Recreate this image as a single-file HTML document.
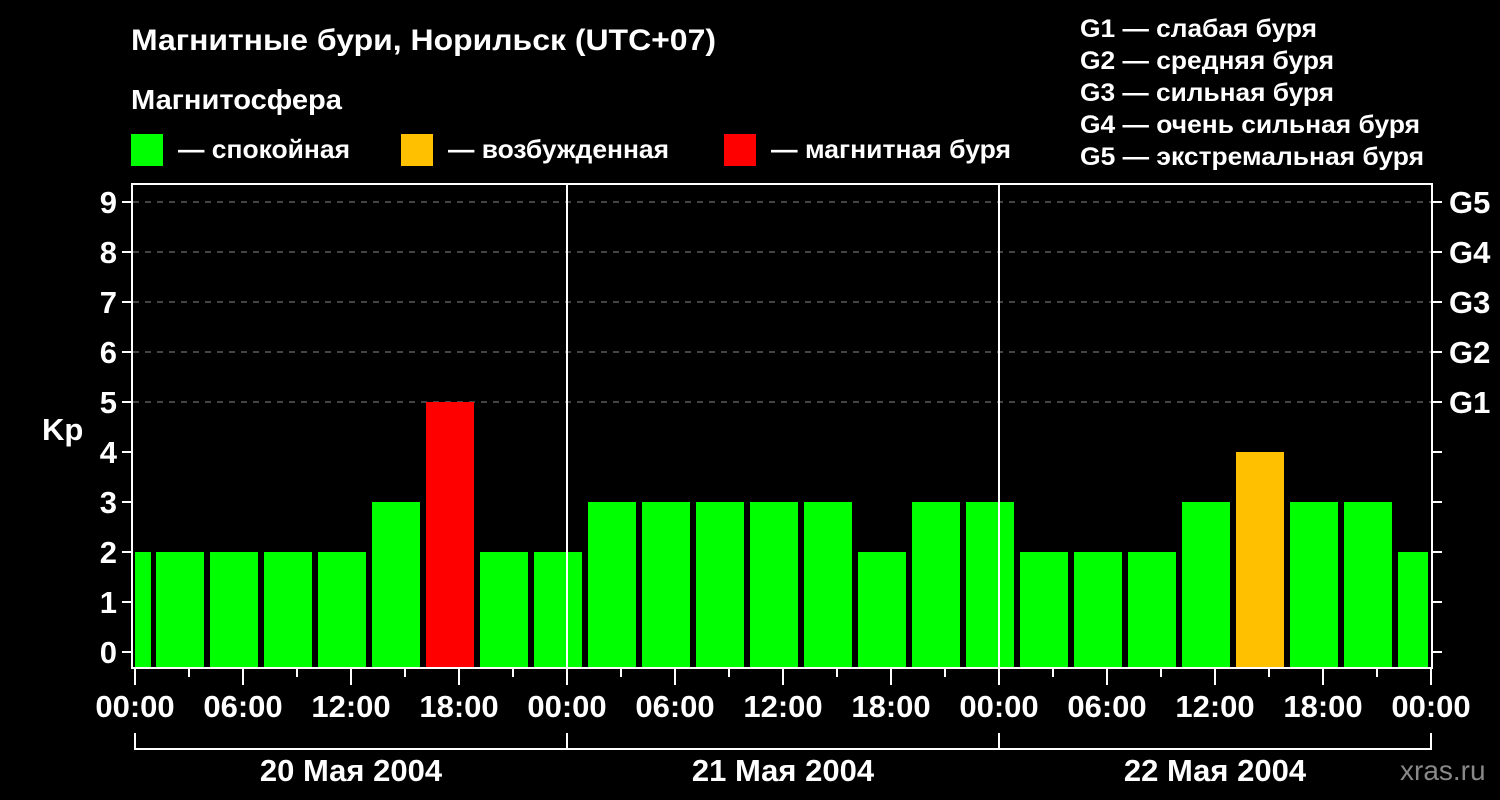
<!DOCTYPE html>
<html><head><meta charset="utf-8"><style>
html,body{margin:0;padding:0;background:#000;width:1500px;height:800px;overflow:hidden}
svg{display:block}
text{font-family:"Liberation Sans",sans-serif;font-weight:bold;fill:#fff}
</style></head><body>
<svg width="1500" height="800" viewBox="0 0 1500 800">
<text x="131" y="50" font-size="30" textLength="585" lengthAdjust="spacingAndGlyphs">Магнитные бури, Норильск (UTC+07)</text>
<text x="131" y="109" font-size="28" textLength="211" lengthAdjust="spacingAndGlyphs">Магнитосфера</text>
<rect x="131" y="134" width="32" height="32" fill="#00ff00"/>
<text x="178" y="158" font-size="26" textLength="172" lengthAdjust="spacingAndGlyphs">— спокойная</text>
<rect x="401" y="134" width="32" height="32" fill="#ffc000"/>
<text x="448" y="158" font-size="26" textLength="221" lengthAdjust="spacingAndGlyphs">— возбужденная</text>
<rect x="724" y="134" width="32" height="32" fill="#ff0000"/>
<text x="771" y="158" font-size="26" textLength="240" lengthAdjust="spacingAndGlyphs">— магнитная буря</text>
<g font-size="25">
<text x="1080" y="37" textLength="237" lengthAdjust="spacingAndGlyphs">G1 — слабая буря</text>
<text x="1080" y="69" textLength="254" lengthAdjust="spacingAndGlyphs">G2 — средняя буря</text>
<text x="1080" y="101" textLength="254" lengthAdjust="spacingAndGlyphs">G3 — сильная буря</text>
<text x="1080" y="133" textLength="340" lengthAdjust="spacingAndGlyphs">G4 — очень сильная буря</text>
<text x="1080" y="165" textLength="344" lengthAdjust="spacingAndGlyphs">G5 — экстремальная буря</text>
</g>
<g stroke="#888" stroke-width="1" stroke-dasharray="6,6">
<line x1="133" y1="202" x2="1432" y2="202"/><line x1="133" y1="252" x2="1432" y2="252"/>
<line x1="133" y1="302" x2="1432" y2="302"/><line x1="133" y1="352" x2="1432" y2="352"/>
<line x1="133" y1="402" x2="1432" y2="402"/>
</g>
<g id="bars">
<rect x="135" y="552" width="16" height="116" fill="#00ff00"/>
<rect x="156" y="552" width="48" height="116" fill="#00ff00"/>
<rect x="210" y="552" width="48" height="116" fill="#00ff00"/>
<rect x="264" y="552" width="48" height="116" fill="#00ff00"/>
<rect x="318" y="552" width="48" height="116" fill="#00ff00"/>
<rect x="372" y="502" width="48" height="166" fill="#00ff00"/>
<rect x="426" y="402" width="48" height="266" fill="#ff0000"/>
<rect x="480" y="552" width="48" height="116" fill="#00ff00"/>
<rect x="534" y="552" width="48" height="116" fill="#00ff00"/>
<rect x="588" y="502" width="48" height="166" fill="#00ff00"/>
<rect x="642" y="502" width="48" height="166" fill="#00ff00"/>
<rect x="696" y="502" width="48" height="166" fill="#00ff00"/>
<rect x="750" y="502" width="48" height="166" fill="#00ff00"/>
<rect x="804" y="502" width="48" height="166" fill="#00ff00"/>
<rect x="858" y="552" width="48" height="116" fill="#00ff00"/>
<rect x="912" y="502" width="48" height="166" fill="#00ff00"/>
<rect x="966" y="502" width="48" height="166" fill="#00ff00"/>
<rect x="1020" y="552" width="48" height="116" fill="#00ff00"/>
<rect x="1074" y="552" width="48" height="116" fill="#00ff00"/>
<rect x="1128" y="552" width="48" height="116" fill="#00ff00"/>
<rect x="1182" y="502" width="48" height="166" fill="#00ff00"/>
<rect x="1236" y="452" width="48" height="216" fill="#ffc000"/>
<rect x="1290" y="502" width="48" height="166" fill="#00ff00"/>
<rect x="1344" y="502" width="48" height="166" fill="#00ff00"/>
<rect x="1398" y="552" width="30" height="116" fill="#00ff00"/>
</g>
<g stroke="#fff" stroke-width="2" fill="none">
<rect x="132" y="184" width="1300" height="484"/>
<line x1="567" y1="184" x2="567" y2="668"/><line x1="999" y1="184" x2="999" y2="668"/>
</g>
<g stroke="#fff" stroke-width="2">
<line x1="122" y1="202" x2="131" y2="202"/><line x1="122" y1="252" x2="131" y2="252"/>
<line x1="122" y1="302" x2="131" y2="302"/><line x1="122" y1="352" x2="131" y2="352"/>
<line x1="122" y1="402" x2="131" y2="402"/><line x1="122" y1="452" x2="131" y2="452"/>
<line x1="122" y1="502" x2="131" y2="502"/><line x1="122" y1="552" x2="131" y2="552"/>
<line x1="122" y1="602" x2="131" y2="602"/><line x1="122" y1="652" x2="131" y2="652"/>
<line x1="1433" y1="202" x2="1442" y2="202"/><line x1="1433" y1="252" x2="1442" y2="252"/>
<line x1="1433" y1="302" x2="1442" y2="302"/><line x1="1433" y1="352" x2="1442" y2="352"/>
<line x1="1433" y1="402" x2="1442" y2="402"/><line x1="1433" y1="452" x2="1442" y2="452"/>
<line x1="1433" y1="502" x2="1442" y2="502"/><line x1="1433" y1="552" x2="1442" y2="552"/>
<line x1="1433" y1="602" x2="1442" y2="602"/><line x1="1433" y1="652" x2="1442" y2="652"/>
<path d="M135 669v16M189 669v8M243 669v16M297 669v8M351 669v16M405 669v8M459 669v16M513 669v8M567 669v16M621 669v8M675 669v16M729 669v8M783 669v16M837 669v8M891 669v16M945 669v8M999 669v16M1053 669v8M1107 669v16M1161 669v8M1215 669v16M1269 669v8M1323 669v16M1377 669v8M1431 669v16"/>
<path d="M135 733v16h1296v-16M567 733v16M999 733v16" fill="none"/>
</g>
<g font-size="31" text-anchor="end">
<text x="117" y="213">9</text><text x="117" y="263">8</text><text x="117" y="313">7</text>
<text x="117" y="363">6</text><text x="117" y="413">5</text><text x="117" y="463">4</text>
<text x="117" y="513">3</text><text x="117" y="563">2</text><text x="117" y="613">1</text>
<text x="117" y="663">0</text>
</g>
<text x="42" y="440" font-size="31">Kp</text>
<g font-size="31">
<text x="1449" y="213">G5</text><text x="1449" y="263">G4</text><text x="1449" y="313">G3</text>
<text x="1449" y="363">G2</text><text x="1449" y="413">G1</text>
</g>
<g font-size="31" text-anchor="middle">
<text x="135" y="717">00:00</text><text x="243" y="717">06:00</text><text x="351" y="717">12:00</text>
<text x="459" y="717">18:00</text><text x="567" y="717">00:00</text><text x="675" y="717">06:00</text>
<text x="783" y="717">12:00</text><text x="891" y="717">18:00</text><text x="999" y="717">00:00</text>
<text x="1107" y="717">06:00</text><text x="1215" y="717">12:00</text><text x="1323" y="717">18:00</text>
<text x="1431" y="717">00:00</text>
<text x="351" y="781">20 Мая 2004</text><text x="783" y="781">21 Мая 2004</text><text x="1215" y="781">22 Мая 2004</text>
</g>
<text x="1400" y="780" font-size="28" style="fill:#888;font-weight:normal">xras.ru</text>
</svg>
</body></html>
